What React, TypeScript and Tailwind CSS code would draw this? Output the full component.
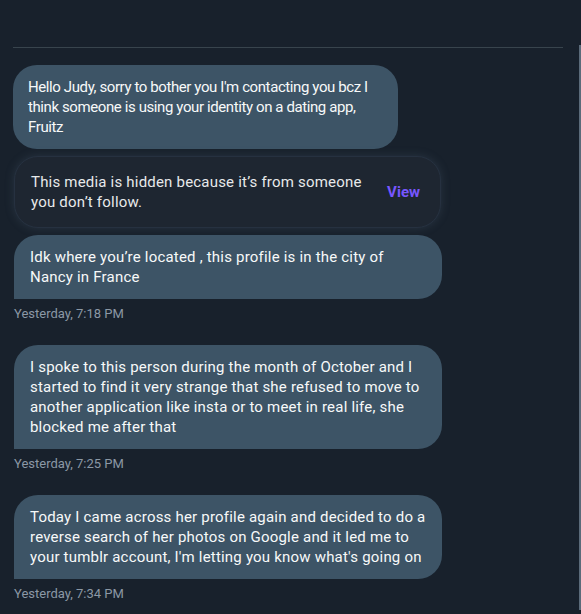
const font = { fontFamily: 'Roboto, "Noto Sans", sans-serif' };

function Bubble({
  lines,
  width,
  squareBottom,
  tight,
}: {
  lines: string[];
  width: string;
  squareBottom?: boolean;
  tight?: boolean;
}) {
  return (
    <div
      className={`${width} bg-[#3d5466] text-[#f7f9f9] text-[15px] leading-5 px-4 py-3 rounded-3xl ${squareBottom ? 'rounded-bl-none' : ''} ${tight ? 'tracking-[-0.4px] pl-[15px]' : 'tracking-[0.2px]'}`}
    >
      {lines.map((l, i) => (
        <div key={i} className="whitespace-nowrap">{l}</div>
      ))}
    </div>
  );
}

function Stamp({ text }: { text: string }) {
  return <div className="text-[13px] leading-4 text-[#8b98a5] mt-[7px]">{text}</div>;
}

export default function App() {
  return (
    <div className="min-h-[614px] w-[581px] bg-[#18212c] relative overflow-hidden" style={font}>
      <div className="absolute right-0 top-[45px] bottom-[4px] w-[2px] bg-[#5b6b7a]" />
      <div className="pt-[47px] pl-[13px] pr-[18px]">
        <div className="h-px bg-[#38444d]" />
        <div className="pt-[17px] flex flex-col">
          <Bubble
            width="w-[385px]"
            tight
            lines={[
              "Hello Judy, sorry to bother you I'm contacting you bcz I",
              'think someone is using your identity on a dating app,',
              'Fruitz',
            ]}
          />
          <div className="mt-[7px] ml-px w-[427px] rounded-3xl bg-[#1e2631] border border-[#263140] shadow-[0_0_10px_rgba(90,110,130,0.25)] px-4 py-[15px] flex items-center justify-between">
            <div className="text-[15px] leading-5 tracking-[0.2px] text-[#e7e9ea]">
              <div>This media is hidden because it’s from someone</div>
              <div>you don’t follow.</div>
            </div>
            <div className="text-[15px] font-bold text-[#7856ff] mr-[4px]">View</div>
          </div>
          <div className="mt-[7px] ml-px">
            <Bubble
              width="w-[428px]"
              squareBottom
              lines={['Idk where you’re located , this profile is in the city of', 'Nancy in France']}
            />
          </div>
          <div className="ml-px">
            <Stamp text="Yesterday, 7:18 PM" />
          </div>
          <div className="mt-[23px] ml-px">
            <Bubble
              width="w-[428px]"
              squareBottom
              lines={[
                'I spoke to this person during the month of October and I',
                'started to find it very strange that she refused to move to',
                'another application like insta or to meet in real life, she',
                'blocked me after that',
              ]}
            />
          </div>
          <div className="ml-px">
            <Stamp text="Yesterday, 7:25 PM" />
          </div>
          <div className="mt-[23px] ml-px">
            <Bubble
              width="w-[428px]"
              squareBottom
              lines={[
                'Today I came across her profile again and decided to do a',
                'reverse search of her photos on Google and it led me to',
                "your tumblr account, I'm letting you know what's going on",
              ]}
            />
          </div>
          <div className="ml-px">
            <Stamp text="Yesterday, 7:34 PM" />
          </div>
        </div>
      </div>
    </div>
  );
}
